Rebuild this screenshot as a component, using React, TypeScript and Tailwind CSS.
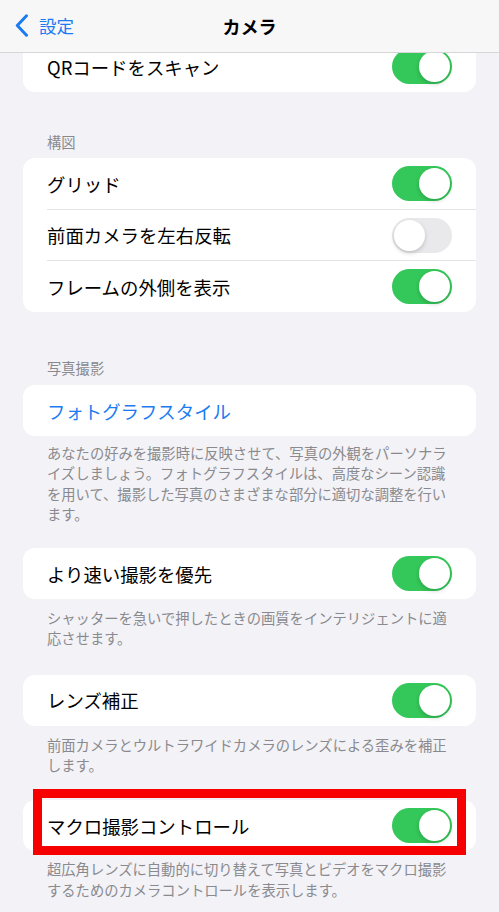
import React from 'react';

const font = { fontFamily: '"Noto Sans CJK JP", "Noto Sans", sans-serif' };

const Toggle: React.FC<{ on?: boolean }> = ({ on = true }) => (
  <div
    className={`relative w-[60px] h-[35px] rounded-full flex-shrink-0 ${
      on ? 'bg-[#34c759]' : 'bg-[#e9e9eb]'
    }`}
  >
    <div
      className={`absolute top-[2px] w-[31px] h-[31px] rounded-full bg-white shadow-[0_2px_4px_rgba(0,0,0,0.18)] ${
        on ? 'right-[2px]' : 'left-[2px]'
      }`}
    />
  </div>
);

const Row: React.FC<{ label: string; on?: boolean; blue?: boolean; toggle?: boolean; h?: string }> = ({
  label,
  on = true,
  blue = false,
  toggle = true,
  h = 'h-[51px]'
}) => (
  <div className={`flex items-center justify-between ${h} pl-[24px] pr-[24px]`}>
    <span
      className={`text-[18.4px] leading-[26px] whitespace-nowrap ${blue ? 'text-[#1b7bf2]' : 'text-black'}`}
    >
      {label}
    </span>
    {toggle && <Toggle on={on} />}
  </div>
);

const Divider = () => <div className="ml-[24px] h-px bg-[#e4e4e8]" />;

const Header: React.FC<{ text: string; className?: string }> = ({ text, className = '' }) => (
  <div className={`px-[47px] text-[14.3px] leading-[20px] text-[#8a8a8e] ${className}`}>{text}</div>
);

const Footer: React.FC<{ lines: string[]; className?: string }> = ({ lines, className = '' }) => (
  <div className={`px-[47px] text-[14.3px] leading-[20.3px] text-[#8a8a8e] ${className}`}>
    {lines.map((l) => (
      <div key={l} className="whitespace-nowrap">
        {l}
      </div>
    ))}
  </div>
);

const Card: React.FC<{ children: React.ReactNode; className?: string }> = ({ children, className = '' }) => (
  <div className={`mx-[23px] bg-white rounded-[12px] overflow-hidden ${className}`}>{children}</div>
);

export default function App() {
  return (
    <div className="w-[499px] h-[912px] overflow-hidden bg-[#f2f2f7]" style={font}>
      {/* Nav bar */}
      <div className="relative z-10 h-[53px] bg-[#f7f7f7] border-b border-[#d6d6d8] flex items-center">
        <div className="flex items-center pl-[15px] pb-[1px]">
          <svg width="14" height="23" viewBox="0 0 14 23" fill="none">
            <path d="M11.5 1.8L2.3 11.5l9.2 9.7" stroke="#1b7bf2" strokeWidth="3" strokeLinecap="round" strokeLinejoin="round" />
          </svg>
          <span className="ml-[10px] text-[17.5px] leading-[24px] text-[#1b7bf2]">設定</span>
        </div>
        <div className="absolute inset-x-0 top-0 h-[53px] flex items-center justify-center pointer-events-none">
          <span className="text-[18px] leading-[24px] font-bold text-black pb-[1px]">カメラ</span>
        </div>
      </div>

      {/* QR card, scrolled under nav */}
      <Card className="mt-[-12px]">
        <Row label="QRコードをスキャン" />
      </Card>

      <Header text="構図" className="mt-[40px]" />
      <Card className="mt-[6px]">
        <Row label="グリッド" />
        <Divider />
        <Row label="前面カメラを左右反転" on={false} h="h-[50px]" />
        <Divider />
        <Row label="フレームの外側を表示" />
      </Card>

      <Header text="写真撮影" className="mt-[46px]" />
      <Card className="mt-[7px]">
        <Row label="フォトグラフスタイル" blue toggle={false} />
      </Card>
      <Footer
        className="pt-[7px]"
        lines={[
          'あなたの好みを撮影時に反映させて、写真の外観をパーソナラ',
          'イズしましょう。フォトグラフスタイルは、高度なシーン認識',
          'を用いて、撮影した写真のさまざまな部分に適切な調整を行い',
          'ます。'
        ]}
      />

      <Card className="mt-[24px]">
        <Row label="より速い撮影を優先" />
      </Card>
      <Footer
        className="pt-[9px]"
        lines={['シャッターを急いで押したときの画質をインテリジェントに適', '応させます。']}
      />

      <Card className="mt-[26px]">
        <Row label="レンズ補正" />
      </Card>
      <Footer
        className="pt-[9px]"
        lines={['前面カメラとウルトラワイドカメラのレンズによる歪みを補正', 'します。']}
      />

      <div className="relative mt-[25px]">
        <Card>
          <Row label="マクロ撮影コントロール" />
        </Card>
        <div className="absolute left-[33px] right-[33px] top-[-11px] bottom-[-4px] border-[9px] border-[#f70000] pointer-events-none" />
      </div>
      <Footer
        className="pt-[8px]"
        lines={['超広角レンズに自動的に切り替えて写真とビデオをマクロ撮影', 'するためのカメラコントロールを表示します。']}
      />
    </div>
  );
}
